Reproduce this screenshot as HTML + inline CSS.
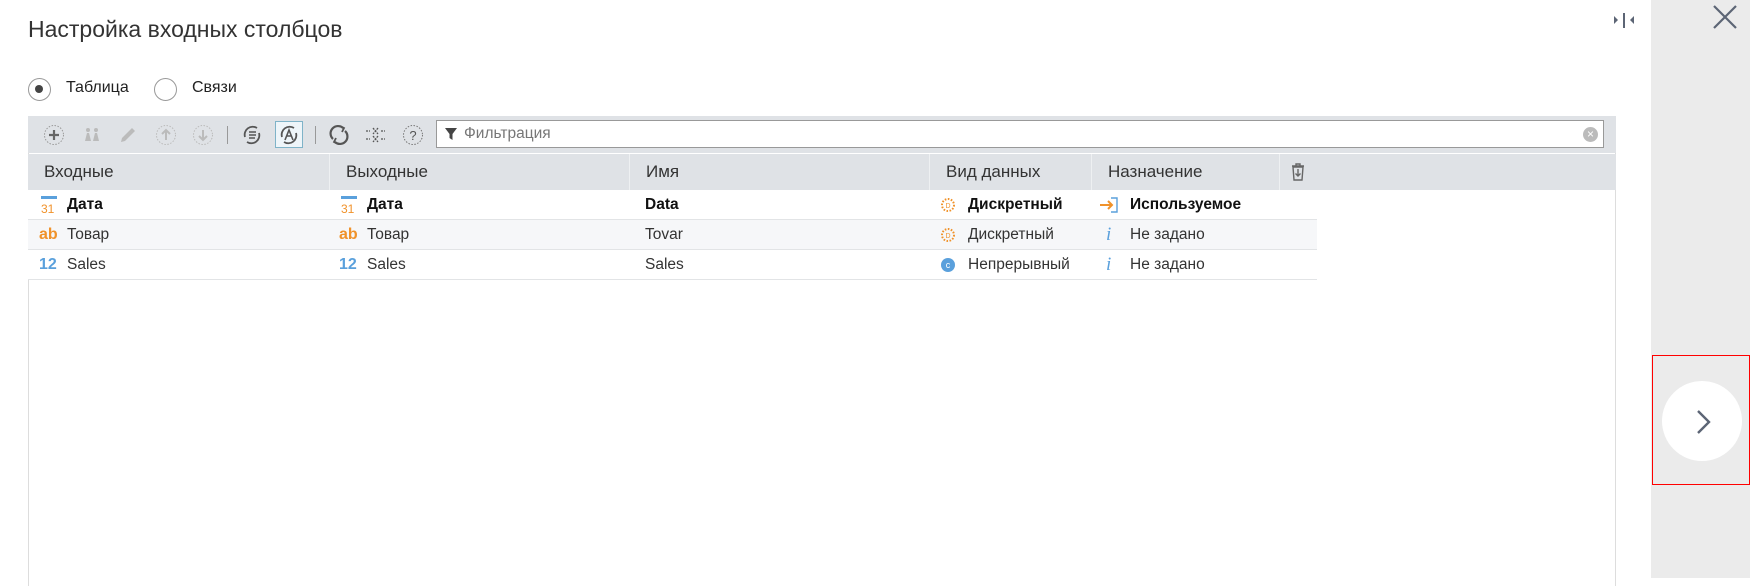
<!DOCTYPE html>
<html><head><meta charset="utf-8"><style>
*{box-sizing:border-box;margin:0;padding:0}
body{width:1750px;height:578px;overflow:hidden;background:#fff;font-family:"Liberation Sans","Noto Sans CJK SC",sans-serif;color:#333;position:relative}
.abs{position:absolute}
.title{left:28px;top:16px;font-size:23px;color:#333}
.radio{top:78px;width:23px;height:23px;border:1.5px solid #999;border-radius:50%}
.radio.on::after{content:"";position:absolute;left:6px;top:6px;width:8px;height:8px;border-radius:50%;background:#444}
.rl{top:79px;font-size:16px;color:#222}
.table{left:28px;top:116px;width:1588px;height:470px;border-left:1px solid #ddd;border-right:1px solid #ddd}
.tb{left:28px;top:116px;width:1588px;height:37px;background:#dfe2e6}
.hd{left:28px;top:154px;width:1588px;height:36px;background:#dfe2e6;font-size:17px;color:#333}
.hd div{position:absolute;top:0;height:36px;line-height:36px;padding-left:16px;border-left:1px solid #eef0f2}
.row{left:28px;width:1289px;height:30px;border-bottom:1px solid #e2e4e6;font-size:15.5px}
.row div{position:absolute;top:0;line-height:29px}
.b{font-weight:bold;color:#111}
.ic{font-weight:bold;font-size:16px}
.or{color:#f0922a}.bl{color:#5aa0dc}
.ti{position:absolute;top:7px}
</style></head><body>
<div class="abs title">Настройка входных столбцов</div>
<div class="abs radio on" style="left:28px"></div><div class="abs rl" style="left:66px">Таблица</div>
<div class="abs radio" style="left:154px"></div><div class="abs rl" style="left:192px">Связи</div>

<div class="abs table"></div>
<div class="abs tb">
<svg class="ti" style="left:14px" width="24" height="24" viewBox="0 0 24 24"><circle cx="12" cy="12" r="9.5" fill="none" stroke="#999" stroke-dasharray="1.5 1.5"/><path d="M12 7v10M7 12h10" stroke="#666" stroke-width="2.2"/></svg>
<svg class="ti" style="left:52px" width="24" height="24" viewBox="0 0 24 24"><g fill="#bbb"><circle cx="8" cy="7" r="2"/><circle cx="16" cy="7" r="2"/><path d="M5 18l2-8h2l2 8zM13 18l2-8h2l2 8z"/></g></svg>
<svg class="ti" style="left:88px" width="24" height="24" viewBox="0 0 24 24"><path d="M5 19l1-4 10-10 3 3-10 10z" fill="#bbb"/></svg>
<svg class="ti" style="left:126px" width="24" height="24" viewBox="0 0 24 24"><circle cx="12" cy="12" r="9.5" fill="none" stroke="#bbb" stroke-dasharray="1.5 1.5"/><path d="M12 17V8M8 11l4-4 4 4" stroke="#bbb" stroke-width="2" fill="none"/></svg>
<svg class="ti" style="left:163px" width="24" height="24" viewBox="0 0 24 24"><circle cx="12" cy="12" r="9.5" fill="none" stroke="#bbb" stroke-dasharray="1.5 1.5"/><path d="M12 7v9M8 13l4 4 4-4" stroke="#bbb" stroke-width="2" fill="none"/></svg>
<div class="abs" style="left:199px;top:10px;width:1px;height:18px;background:#999"></div>
<svg class="ti" style="left:212px" width="24" height="24" viewBox="0 0 24 24"><path d="M5 14a8 8 0 0 1 12-9M19 10a8 8 0 0 1-12 9" stroke="#555" stroke-width="1.8" fill="none"/><path d="M9 9h7M9 12h7M9 15h6" stroke="#555" stroke-width="1.5"/></svg>
<div class="abs" style="left:247px;top:5px;width:28px;height:27px;border:1px solid #7fb3c8;background:#eef5f9"></div>
<svg class="ti" style="left:249px" width="24" height="24" viewBox="0 0 24 24"><path d="M5 14a8 8 0 0 1 12-9M19 10a8 8 0 0 1-12 9" stroke="#555" stroke-width="1.8" fill="none"/><path d="M8 17l4-10 4 10M9.5 13h5" stroke="#555" stroke-width="1.6" fill="none"/></svg>
<div class="abs" style="left:287px;top:10px;width:1px;height:18px;background:#999"></div>
<svg class="ti" style="left:299px" width="24" height="24" viewBox="0 0 24 24"><path d="M6 16A7 7 0 0 1 16 5" fill="none" stroke="#555" stroke-width="2.2"/><path d="M18 8A7 7 0 0 1 8 19" fill="none" stroke="#555" stroke-width="2.2"/><path d="M13 3l4 2-2 4" fill="none" stroke="#555" stroke-width="1.8"/><path d="M11 21l-4-2 2-4" fill="none" stroke="#555" stroke-width="1.8"/></svg>
<svg class="ti" style="left:336px" width="24" height="24" viewBox="0 0 24 24"><path d="M2 8h4M9 5l5 6M14 5l-5 6M17 8h4M2 16h4M9 13l5 6M14 13l-5 6M17 16h4" stroke="#555" stroke-width="1.3" fill="none" stroke-dasharray="2 1"/></svg>
<svg class="ti" style="left:373px" width="24" height="24" viewBox="0 0 24 24"><circle cx="12" cy="12" r="9.5" fill="none" stroke="#777" stroke-dasharray="1.5 1.5"/><text x="12" y="17" text-anchor="middle" font-size="13" font-family="Liberation Sans" fill="#555">?</text></svg>
<div class="abs" style="left:408px;top:4px;width:1168px;height:28px;background:#fff;border:1px solid #999"></div>
<svg class="abs" style="left:416px;top:11px" width="14" height="14" viewBox="0 0 14 14"><path d="M1 1h12L8.5 7v6L5.5 11V7z" fill="#444"/></svg>
<div class="abs" style="left:436px;top:9px;font-size:15.5px;color:#777">Фильтрация</div>
<div class="abs" style="left:1555px;top:11px;width:15px;height:15px;border-radius:50%;background:#bbb;color:#fff;font-size:12px;line-height:15px;text-align:center">×</div>
</div>
<div class="abs hd">
<div style="left:0;border:none">Входные</div>
<div style="left:301px">Выходные</div>
<div style="left:601px">Имя</div>
<div style="left:901px">Вид данных</div>
<div style="left:1063px">Назначение</div>
<div style="left:1251px;width:337px">
<svg style="position:absolute;left:10px;top:9px" width="16" height="18" viewBox="0 0 16 18"><path d="M2 3h12M6 3V1h4v2M3 4l1 13h8l1-13z" fill="none" stroke="#666" stroke-width="1.4"/><path d="M8 6v7M5.5 10.5L8 13l2.5-2.5" stroke="#666" stroke-width="1.4" fill="none"/></svg></div>
</div>

<div class="abs row" style="top:190px;background:#fff">
<div style="left:13px;font-size:12px;color:#f0922a;top:2px"><span style="display:block;border-top:3px solid #5aa0dc;width:16px;line-height:20px;margin-top:4px">31</span></div>
<div class="b" style="left:39px">Дата</div>
<div style="left:313px;font-size:12px;color:#f0922a;top:2px"><span style="display:block;border-top:3px solid #5aa0dc;width:16px;line-height:20px;margin-top:4px">31</span></div>
<div class="b" style="left:339px">Дата</div>
<div class="b" style="left:617px">Data</div>
<svg style="position:absolute;left:912px;top:7px" width="16" height="16" viewBox="0 0 16 16"><circle cx="8" cy="8" r="6" fill="none" stroke="#f0922a" stroke-width="2" stroke-dasharray="1.6 1.5"/><text x="8" y="11" text-anchor="middle" font-size="7" font-family="Liberation Sans" fill="#f0922a">D</text></svg>
<div class="b" style="left:940px">Дискретный</div>
<svg style="position:absolute;left:1071px;top:6px" width="20" height="18" viewBox="0 0 20 18"><path d="M12 2h6v14h-6" fill="none" stroke="#5aa0dc" stroke-width="1.4"/><path d="M1 9h12M9 5l4 4-4 4" fill="none" stroke="#f0922a" stroke-width="2"/></svg>
<div class="b" style="left:1102px">Используемое</div>
</div>
<div class="abs row" style="top:220px;background:#f6f7f9">
<div class="ic or" style="left:11px">ab</div><div style="left:39px">Товар</div>
<div class="ic or" style="left:311px">ab</div><div style="left:339px">Товар</div>
<div style="left:617px">Tovar</div>
<svg style="position:absolute;left:912px;top:7px" width="16" height="16" viewBox="0 0 16 16"><circle cx="8" cy="8" r="6" fill="none" stroke="#f0922a" stroke-width="2" stroke-dasharray="1.6 1.5"/><text x="8" y="11" text-anchor="middle" font-size="7" font-family="Liberation Sans" fill="#f0922a">D</text></svg>
<div style="left:940px">Дискретный</div>
<div style="left:1078px;font-style:italic;font-family:'Liberation Serif',serif;font-size:19px" class="bl">i</div>
<div style="left:1102px">Не задано</div>
</div>
<div class="abs row" style="top:250px;background:#fff">
<div class="ic bl" style="left:11px">12</div><div style="left:39px">Sales</div>
<div class="ic bl" style="left:311px">12</div><div style="left:339px">Sales</div>
<div style="left:617px">Sales</div>
<div style="left:913px;top:8px;width:14px;height:14px;border-radius:50%;background:#5aa0dc;color:#fff;font-size:9px;line-height:14px;text-align:center">c</div>
<div style="left:940px">Непрерывный</div>
<div style="left:1078px;font-style:italic;font-family:'Liberation Serif',serif;font-size:19px" class="bl">i</div>
<div style="left:1102px">Не задано</div>
</div>

<svg class="abs" style="left:1612px;top:10px" width="24" height="20" viewBox="0 0 24 20"><path d="M2 6l4 4-4 4z" fill="#5c6575"/><rect x="11" y="3" width="2" height="15" fill="#5c6575"/><path d="M22 6l-4 4 4 4z" fill="#5c6575"/></svg>
<div class="abs" style="left:1651px;top:0;width:99px;height:578px;background:#ebebeb"></div>
<svg class="abs" style="left:1712px;top:4px" width="26" height="26" viewBox="0 0 26 26"><path d="M2 2l22 22M24 2L2 24" stroke="#5c6575" stroke-width="2.2"/></svg>
<div class="abs" style="left:1652px;top:355px;width:98px;height:130px;border:1.5px solid #f00"></div>
<div class="abs" style="left:1662px;top:381px;width:80px;height:80px;border-radius:50%;background:#fff"></div>
<svg class="abs" style="left:1696px;top:409px" width="16" height="26" viewBox="0 0 16 26"><path d="M2 2l11 11L2 24" stroke="#5c6575" stroke-width="2.4" fill="none"/></svg>
</body></html>
